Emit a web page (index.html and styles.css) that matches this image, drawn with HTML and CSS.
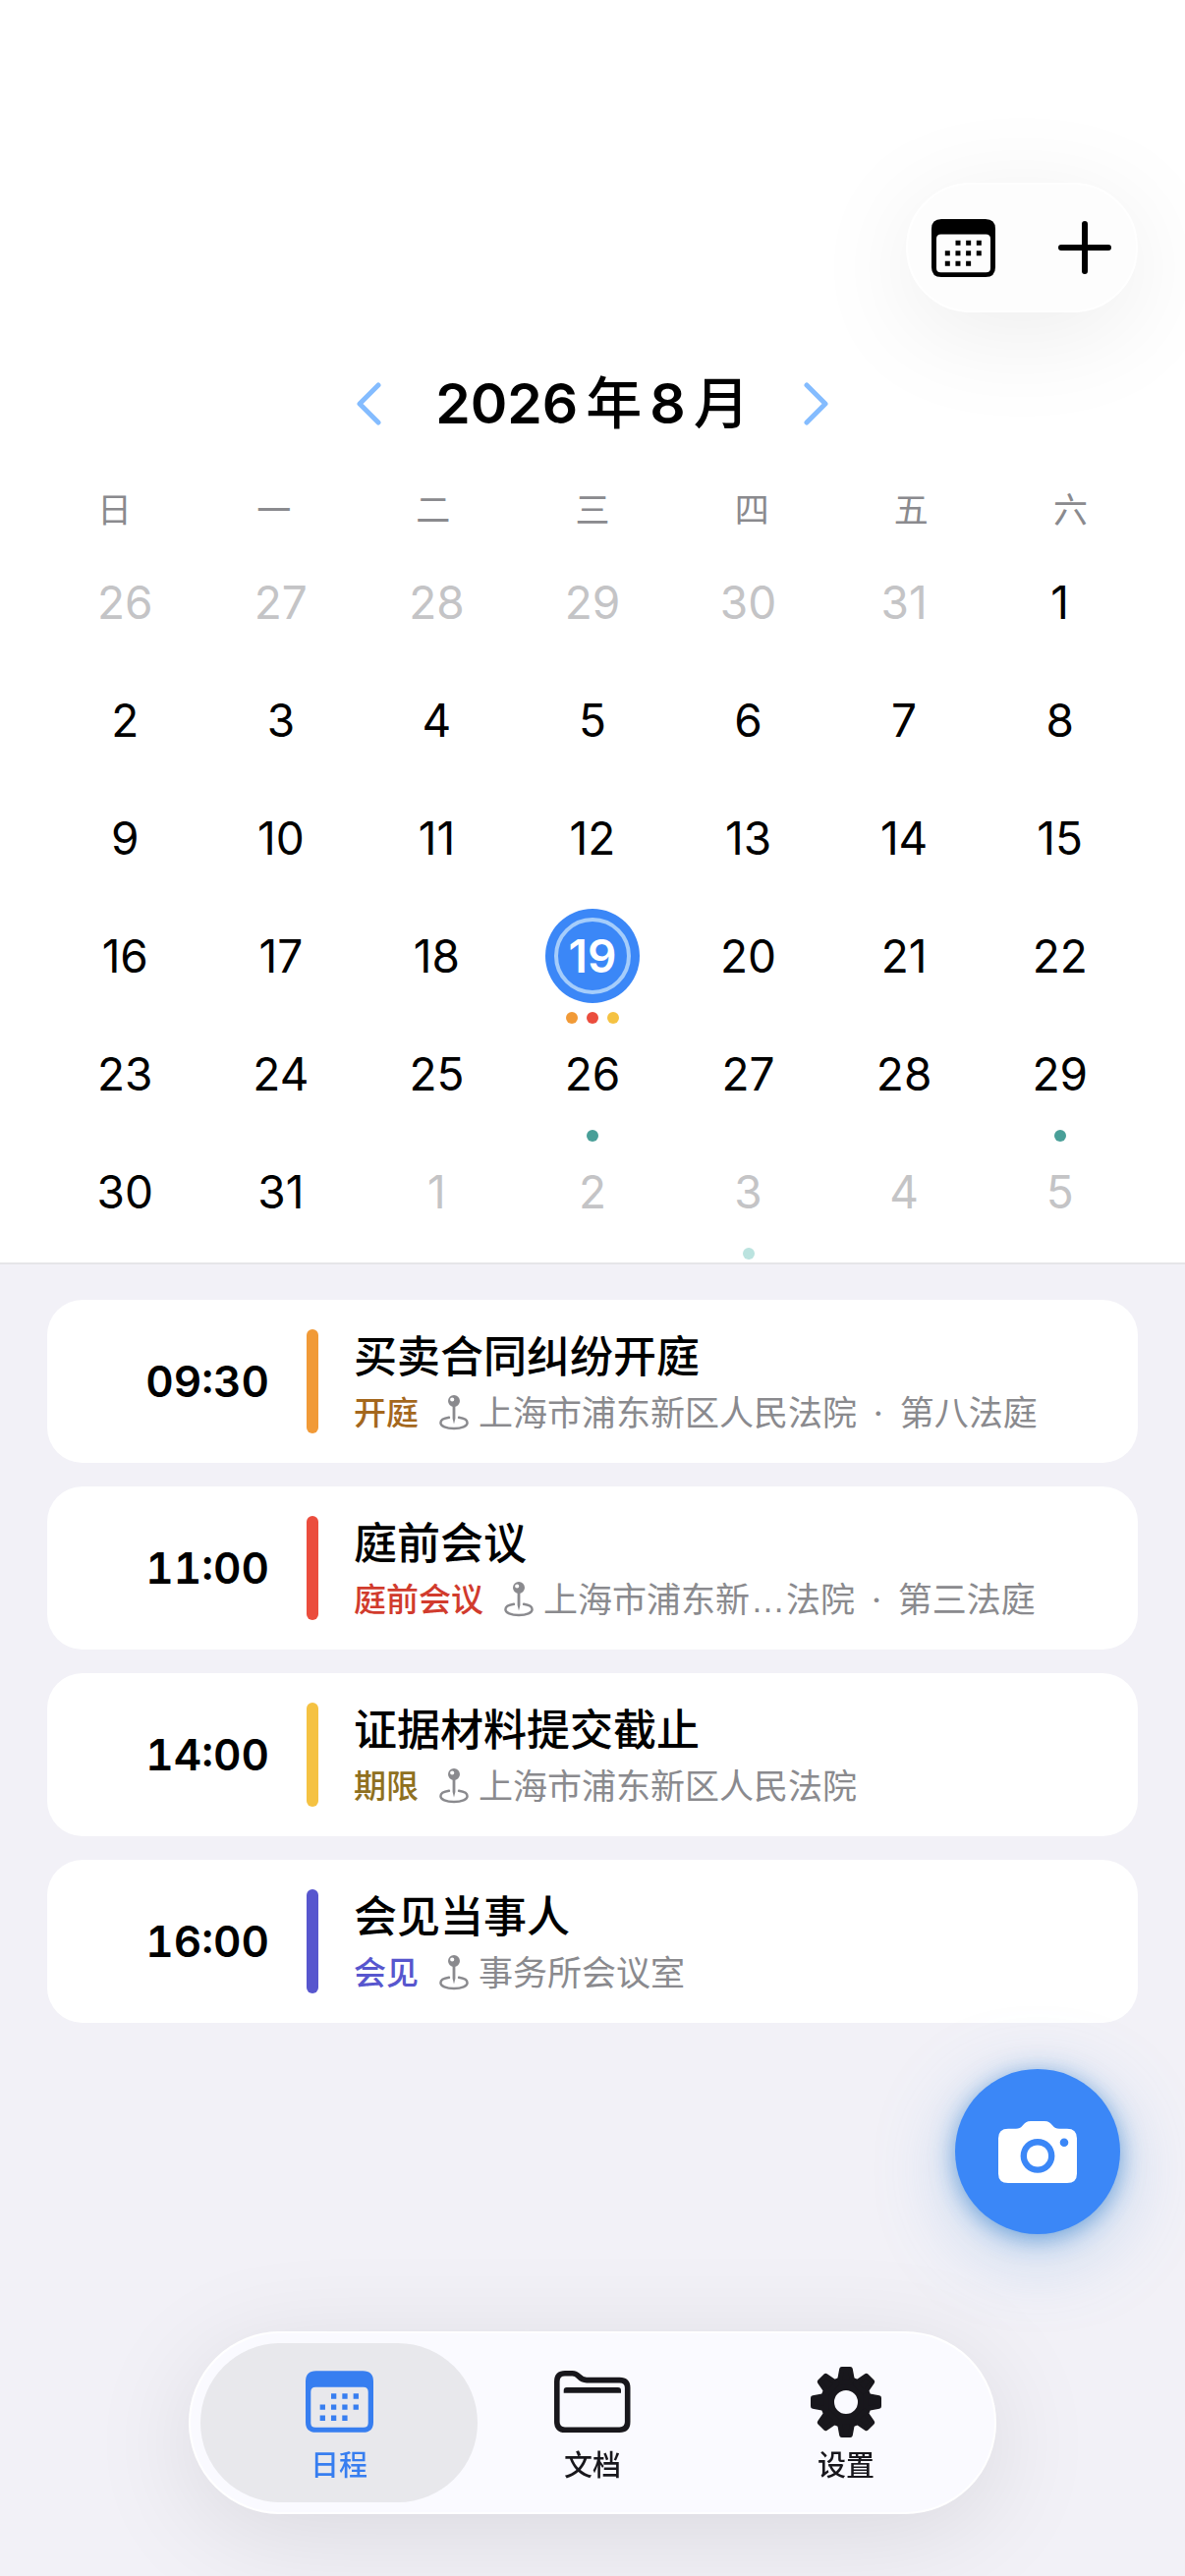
FILE: index.html
```html
<!DOCTYPE html>
<html lang="zh-CN">
<head>
<meta charset="utf-8">
<meta name="viewport" content="width=device-width, initial-scale=1">
<title>日程</title>
<link rel="stylesheet" href="styles.css">
</head>
<body>
<svg class="sprite" aria-hidden="true">
  <symbol id="icon-calendar" viewBox="0 0 65 59">
    <path fill="currentColor" fill-rule="evenodd" d="M10 0H55Q65 0 65 10V49Q65 59 55 59H10Q0 59 0 49V10Q0 0 10 0ZM9.500 15.500Q5 15.500 5 20V50Q5 54.300 9.500 54.300H55.500Q60 54.300 60 50V20Q60 15.500 55.500 15.500Z"/>
    <path fill="none" stroke="currentColor" stroke-width="5" stroke-dasharray="5 5.660" d="M24.500 24.300H51M13.800 34.800H51M13.800 45.300H40.300"/>
  </symbol>
  <symbol id="icon-pin" viewBox="0 0 30 36">
    <path fill="none" stroke="currentColor" stroke-width="2.400" stroke-linecap="round" d="M10 22.800C4.500 23.600 1.400 25.700 1.400 28.200C1.400 31.500 7 34 15 34S28.600 31.500 28.600 28.200C28.600 25.700 25.500 23.600 20 22.800"/>
    <path fill="currentColor" d="M13.600 11H16.400V24L15 29.500L13.600 24Z"/>
    <path fill="currentColor" fill-rule="evenodd" d="M15 0A6 6 0 0 1 15 12A6 6 0 0 1 15 0ZM13.200 2.400A2.100 2.100 0 0 0 13.200 6.600A2.100 2.100 0 0 0 13.200 2.400Z"/>
  </symbol>
</svg>

<header class="top">
  <div class="toolbar">
    <button class="tool" type="button" aria-label="日历">
      <svg class="tool-calendar" aria-hidden="true"><use href="#icon-calendar"/></svg>
    </button>
    <button class="tool" type="button" aria-label="新建">
      <svg class="tool-plus" viewBox="0 0 54 54" aria-hidden="true"><path d="M27 3V51M3 27H51"/></svg>
    </button>
  </div>
</header>

<section class="calendar" aria-label="月历">
  <div class="month">
    <button class="arrow" type="button" aria-label="上个月">
      <svg viewBox="0 0 25 44" aria-hidden="true"><path d="M22 3L3 22L22 41"/></svg>
    </button>
    <h1 class="month-title"><span>2026</span><span class="unit">年</span><span>8</span><span class="unit">月</span></h1>
    <button class="arrow" type="button" aria-label="下个月">
      <svg viewBox="0 0 25 44" aria-hidden="true"><path d="M3 3L22 22L3 41"/></svg>
    </button>
  </div>
  <div class="weekdays">
    <span>日</span><span>一</span><span>二</span><span>三</span><span>四</span><span>五</span><span>六</span>
  </div>
  <div class="days">
    <button class="day outside" type="button"><span class="num">26</span></button>
    <button class="day outside" type="button"><span class="num">27</span></button>
    <button class="day outside" type="button"><span class="num">28</span></button>
    <button class="day outside" type="button"><span class="num">29</span></button>
    <button class="day outside" type="button"><span class="num">30</span></button>
    <button class="day outside" type="button"><span class="num">31</span></button>
    <button class="day" type="button"><span class="num">1</span></button>
    <button class="day" type="button"><span class="num">2</span></button>
    <button class="day" type="button"><span class="num">3</span></button>
    <button class="day" type="button"><span class="num">4</span></button>
    <button class="day" type="button"><span class="num">5</span></button>
    <button class="day" type="button"><span class="num">6</span></button>
    <button class="day" type="button"><span class="num">7</span></button>
    <button class="day" type="button"><span class="num">8</span></button>
    <button class="day" type="button"><span class="num">9</span></button>
    <button class="day" type="button"><span class="num">10</span></button>
    <button class="day" type="button"><span class="num">11</span></button>
    <button class="day" type="button"><span class="num">12</span></button>
    <button class="day" type="button"><span class="num">13</span></button>
    <button class="day" type="button"><span class="num">14</span></button>
    <button class="day" type="button"><span class="num">15</span></button>
    <button class="day" type="button"><span class="num">16</span></button>
    <button class="day" type="button"><span class="num">17</span></button>
    <button class="day" type="button"><span class="num">18</span></button>
    <button class="day today" type="button" aria-current="date"><span class="num"><span class="ring">19</span></span><span class="dots"><i class="dot orange"></i><i class="dot red"></i><i class="dot yellow"></i></span></button>
    <button class="day" type="button"><span class="num">20</span></button>
    <button class="day" type="button"><span class="num">21</span></button>
    <button class="day" type="button"><span class="num">22</span></button>
    <button class="day" type="button"><span class="num">23</span></button>
    <button class="day" type="button"><span class="num">24</span></button>
    <button class="day" type="button"><span class="num">25</span></button>
    <button class="day" type="button"><span class="num">26</span><span class="dots"><i class="dot teal"></i></span></button>
    <button class="day" type="button"><span class="num">27</span></button>
    <button class="day" type="button"><span class="num">28</span></button>
    <button class="day" type="button"><span class="num">29</span><span class="dots"><i class="dot teal"></i></span></button>
    <button class="day" type="button"><span class="num">30</span></button>
    <button class="day" type="button"><span class="num">31</span></button>
    <button class="day outside" type="button"><span class="num">1</span></button>
    <button class="day outside" type="button"><span class="num">2</span></button>
    <button class="day outside" type="button"><span class="num">3</span><span class="dots"><i class="dot pale"></i></span></button>
    <button class="day outside" type="button"><span class="num">4</span></button>
    <button class="day outside" type="button"><span class="num">5</span></button>
  </div>
</section>

<main class="agenda">
  <ul class="events">
    <li class="event hearing">
      <time class="time">09:30</time>
      <span class="bar"></span>
      <div class="info">
        <h2 class="name">买卖合同纠纷开庭</h2>
        <p class="meta"><span class="kind">开庭</span><span class="place"><svg class="pin" aria-hidden="true"><use href="#icon-pin"/></svg><span>上海市浦东新区人民法院<span class="sep"> · </span>第八法庭</span></span></p>
      </div>
    </li>
    <li class="event pretrial">
      <time class="time">11:00</time>
      <span class="bar"></span>
      <div class="info">
        <h2 class="name">庭前会议</h2>
        <p class="meta"><span class="kind">庭前会议</span><span class="place"><svg class="pin" aria-hidden="true"><use href="#icon-pin"/></svg><span>上海市浦东新<span class="ellipsis">…</span>法院<span class="sep"> · </span>第三法庭</span></span></p>
      </div>
    </li>
    <li class="event deadline">
      <time class="time">14:00</time>
      <span class="bar"></span>
      <div class="info">
        <h2 class="name">证据材料提交截止</h2>
        <p class="meta"><span class="kind">期限</span><span class="place"><svg class="pin" aria-hidden="true"><use href="#icon-pin"/></svg><span>上海市浦东新区人民法院</span></span></p>
      </div>
    </li>
    <li class="event meeting">
      <time class="time">16:00</time>
      <span class="bar"></span>
      <div class="info">
        <h2 class="name">会见当事人</h2>
        <p class="meta"><span class="kind">会见</span><span class="place"><svg class="pin" aria-hidden="true"><use href="#icon-pin"/></svg><span>事务所会议室</span></span></p>
      </div>
    </li>
  </ul>
</main>

<button class="camera" type="button" aria-label="拍照">
  <svg viewBox="0 0 80 63" aria-hidden="true">
    <path fill="currentColor" fill-rule="evenodd" d="M10 7.700H18C21 7.700 22.500 7 24.500 4.700C27 1.600 29 0 33 0H47C51 0 53 1.600 55.500 4.700C57.500 7 59 7.700 62 7.700H70Q80 7.700 80 17.500V53.500Q80 63 70 63H10Q0 63 0 53.500V17.500Q0 7.700 10 7.700ZM40 18A17.400 17.400 0 0 0 40 52.800A17.400 17.400 0 0 0 40 18ZM67 17.400A4.300 4.300 0 0 0 67 26A4.300 4.300 0 0 0 67 17.400Z"/>
    <circle fill="currentColor" cx="40" cy="35.400" r="11"/>
  </svg>
</button>

<nav class="tabs">
  <a class="tab selected" href="#schedule" aria-current="page">
    <svg class="tab-calendar" aria-hidden="true"><use href="#icon-calendar"/></svg>
    <span>日程</span>
  </a>
  <a class="tab" href="#documents">
    <svg class="tab-folder" viewBox="0 0 78 63" aria-hidden="true">
      <path fill="none" stroke="currentColor" stroke-width="5.600" d="M2.800 11Q2.800 2.800 11 2.800H18.500C21.500 2.800 22.800 3.500 25 5.800C27.500 8.500 29 9.600 33 9.600H66.500Q74.700 9.600 74.700 17.500V52Q74.700 60.200 66.500 60.200H11Q2.800 60.200 2.800 52Z"/>
      <path fill="currentColor" d="M9.700 22.800V20Q9.700 17 12.700 17H65Q68 17 68 20V22.800Z"/>
    </svg>
    <span>文档</span>
  </a>
  <a class="tab" href="#settings">
    <svg class="tab-gear" viewBox="-36 -36 72 72" aria-hidden="true">
      <circle r="19" fill="none" stroke="currentColor" stroke-width="14"/>
      <g fill="currentColor" stroke="currentColor" stroke-width="5" stroke-linejoin="round">
        <path id="tooth" d="M-4.300-33.500H4.300L6.800-20H-6.800Z"/>
        <use href="#tooth" transform="rotate(45)"/>
        <use href="#tooth" transform="rotate(90)"/>
        <use href="#tooth" transform="rotate(135)"/>
        <use href="#tooth" transform="rotate(180)"/>
        <use href="#tooth" transform="rotate(225)"/>
        <use href="#tooth" transform="rotate(270)"/>
        <use href="#tooth" transform="rotate(315)"/>
      </g>
    </svg>
    <span>设置</span>
  </a>
</nav>
</body>
</html>
```
FILE: styles.css
```css
* {
  box-sizing: border-box;
}

body {
  margin: 0;
  min-height: 100vh;
  display: flex;
  flex-direction: column;
  background: #fff;
  color: #000;
  font-family: Inter, "Noto Sans CJK SC", sans-serif;
}

button {
  margin: 0;
  padding: 0;
  border: 0;
  background: none;
  color: inherit;
  font: inherit;
  cursor: pointer;
}

h1, h2, p, ul {
  margin: 0;
  padding: 0;
}

svg {
  display: block;
}

.sprite {
  position: absolute;
  width: 0;
  height: 0;
}

/* Top toolbar */
.top {
  display: flex;
  justify-content: flex-end;
  padding: 186px 48px 0;
}

.toolbar {
  display: flex;
  align-items: center;
  gap: 64px;
  height: 132px;
  padding: 0 25px 0 24px;
  border: 2px solid #fff;
  border-radius: 66px;
  background: #fdfdfd;
  box-shadow: 0 20px 110px rgba(0, 0, 0, 0.08);
}

.tool-calendar {
  width: 65px;
  height: 59px;
}

.tool-plus {
  width: 54px;
  height: 54px;
  fill: none;
  stroke: currentColor;
  stroke-width: 6;
  stroke-linecap: round;
}

/* Month calendar */
.calendar {
  border-bottom: 2px solid #e5e5e8;
}

.month {
  display: flex;
  align-items: center;
  justify-content: center;
  gap: 55px;
  margin-top: 63px;
}

.month-title {
  display: flex;
  gap: 8px;
  font-size: 57px;
  line-height: 60px;
  font-weight: 600;
}

.unit {
  font-weight: 500;
}

.arrow svg {
  width: 25px;
  height: 44px;
  fill: none;
  stroke: #84bcff;
  stroke-width: 5;
  stroke-linecap: round;
  stroke-linejoin: round;
}

.weekdays {
  display: flex;
  justify-content: space-between;
  margin-top: 57px;
  padding: 0 99px;
  color: #8a8a8e;
  font-size: 35px;
  line-height: 42px;
}

.days {
  display: grid;
  grid-template-columns: repeat(7, 1fr);
  grid-auto-rows: 120px;
  margin-top: 25px;
  padding: 0 48px;
}

.day {
  display: flex;
  flex-direction: column;
  align-items: center;
  gap: 9px;
  font-size: 46px;
}

.num {
  display: grid;
  place-items: center;
  width: 96px;
  height: 96px;
  border-radius: 50%;
}

.outside {
  color: #c4c4c6;
}

.today .num {
  background: #3b87f7;
  color: #fff;
  font-weight: 600;
}

.ring {
  display: grid;
  place-items: center;
  width: 78px;
  height: 78px;
  border: 4px solid #a5cdfb;
  border-radius: 50%;
}

.dots {
  display: flex;
  gap: 9px;
}

.dot {
  width: 12px;
  height: 12px;
  border-radius: 50%;
}

.orange { background: #f19a37; }
.red { background: #eb4d3d; }
.yellow { background: #f5c242; }
.teal { background: #499f98; }
.pale { background: #bbe3df; }

/* Agenda list */
.agenda {
  flex: 1;
  padding: 36px 48px 240px;
  background: #f2f1f7;
}

.events {
  display: flex;
  flex-direction: column;
  gap: 24px;
  list-style: none;
}

.event {
  display: flex;
  align-items: center;
  padding: 30px 36px 30px 30px;
  border-radius: 36px;
  background: #fff;
}

.time {
  width: 196px;
  text-align: right;
  font-size: 44px;
  font-weight: 600;
  font-variant-numeric: tabular-nums;
}

.bar {
  align-self: stretch;
  width: 12px;
  margin: 0 36px 0 38px;
  border-radius: 6px;
  background: var(--accent);
}

.info {
  display: flex;
  flex-direction: column;
  gap: 8px;
}

.name {
  font-size: 44px;
  line-height: 56px;
  font-weight: 500;
}

.meta {
  display: flex;
  align-items: center;
  gap: 21px;
  line-height: 42px;
  white-space: nowrap;
}

.kind {
  color: var(--label);
  font-size: 33px;
  font-weight: 500;
}

.place {
  display: flex;
  align-items: center;
  gap: 10px;
  color: #8a8a8e;
  font-size: 35px;
}

.sep {
  margin: 0 7px;
}

.ellipsis {
  margin: 0 1px;
  font-family: "Liberation Sans", sans-serif;
  line-height: 1;
}

.pin {
  width: 30px;
  height: 36px;
}

.hearing { --accent: #f19a37; --label: #a4671d; }
.pretrial { --accent: #eb4d3d; --label: #d13b2d; }
.deadline { --accent: #f5c242; --label: #8f7020; }
.meeting { --accent: #5756ce; --label: #5756ce; }

/* Floating camera button */
.camera {
  position: fixed;
  right: 66px;
  bottom: 348px;
  display: grid;
  place-items: center;
  width: 168px;
  height: 168px;
  border-radius: 50%;
  background: #3b87f7;
  color: #fff;
  box-shadow: 0 4px 24px rgba(40, 120, 200, 0.6), 0 18px 80px rgba(80, 150, 220, 0.35);
}

.camera svg {
  width: 80px;
  height: 63px;
}

/* Tab bar */
.tabs {
  position: fixed;
  right: 192px;
  bottom: 63px;
  left: 192px;
  display: grid;
  grid-template-columns: repeat(3, 1fr);
  height: 186px;
  padding: 10px 22px;
  border: 2px solid #fff;
  border-radius: 93px;
  background: #fafaff;
  box-shadow: 0 20px 110px rgba(0, 0, 0, 0.1);
}

.tab {
  display: grid;
  grid-template-rows: 72px 42px;
  align-content: center;
  place-items: center;
  gap: 8px;
  padding-top: 7px;
  color: #18171c;
  font-size: 29px;
  line-height: 42px;
  font-weight: 500;
  text-decoration: none;
}

.selected {
  margin: 0 -12px;
  border-radius: 81px;
  background: #e8e8ec;
  color: #377ef0;
}

.tab-calendar {
  width: 69px;
  height: 63px;
}

.tab-folder {
  width: 78px;
  height: 63px;
}

.tab-gear {
  width: 72px;
  height: 72px;
}
```
